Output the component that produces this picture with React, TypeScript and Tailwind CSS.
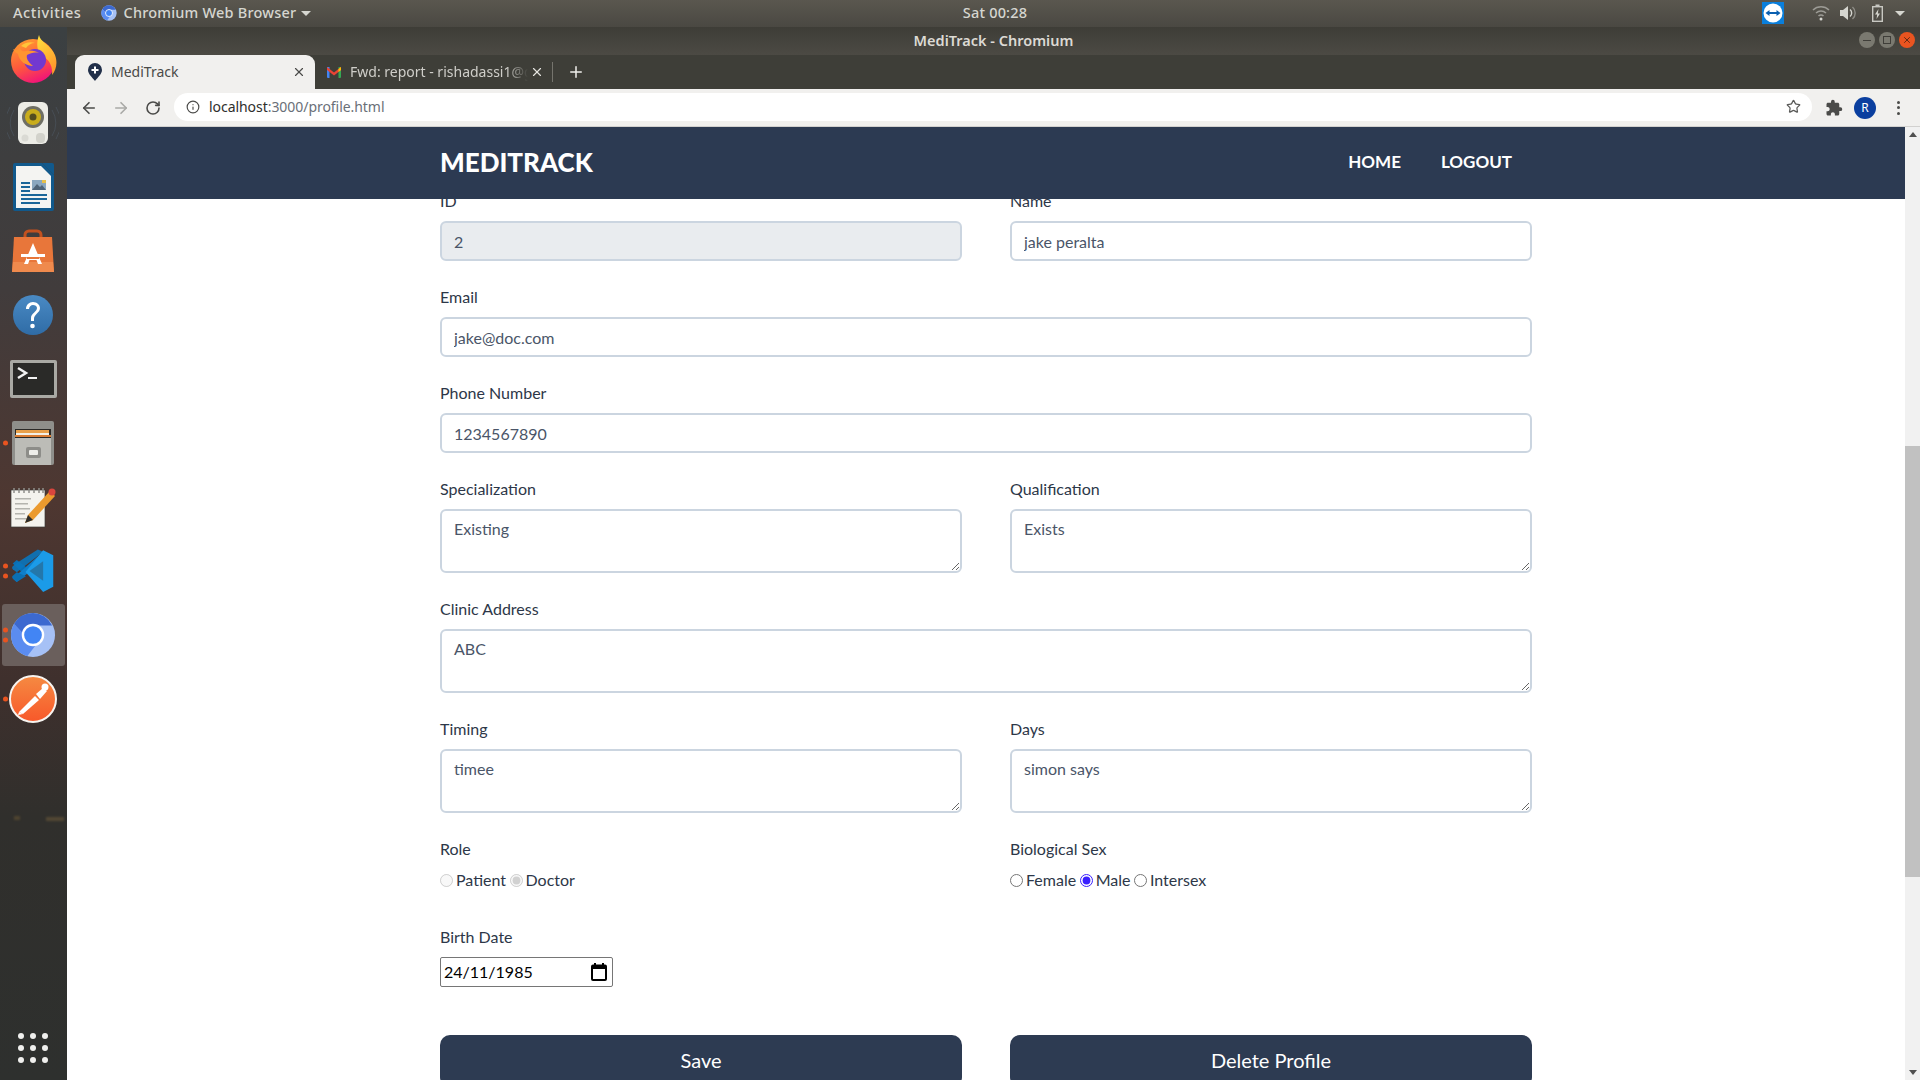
import { ArrowLeft, ArrowRight, Info, Plus, RotateCw, Star, X } from "lucide-react";
import { MdExtension } from "react-icons/md";

const labelClass = "block mb-2 text-base leading-6 text-[#2d3748]";
const fieldClass =
  "block w-full border-2 border-[#cbd5e0] rounded-md px-3 text-base text-[#4a5568] outline-none";

const ChromiumIcon = ({ size }: { size: number }) => (
  <svg width={size} height={size} viewBox="0 0 48 48">
    <circle cx="24" cy="24" r="23" fill="#a6c1f6" />
    <path d="M24 1a23 23 0 0 0-19.9 11.5L15 24l9-10h20A23 23 0 0 0 24 1z" fill="#3c69d0" />
    <path d="M4.1 12.5A23 23 0 0 0 18 46.2L28 33 15 24z" fill="#5b8cf0" />
    <circle cx="24" cy="24" r="10.5" fill="#4285f4" stroke="#fff" strokeWidth="2.5" />
  </svg>
);

const FirefoxIcon = () => (
  <svg width="48" height="48" viewBox="0 0 48 48">
    <defs>
      <linearGradient id="ffBody" x1="0.2" y1="0" x2="0.6" y2="1">
        <stop offset="0" stopColor="#ff9f2e" />
        <stop offset="0.55" stopColor="#ff5a3c" />
        <stop offset="1" stopColor="#f0127a" />
      </linearGradient>
      <linearGradient id="ffTop" x1="0" y1="0" x2="0.4" y2="1">
        <stop offset="0" stopColor="#ffe23f" />
        <stop offset="1" stopColor="#ff9a2c" />
      </linearGradient>
    </defs>
    <circle cx="24" cy="26" r="22" fill="url(#ffBody)" />
    <path d="M30 0c1 7 12 10 16 20 3 8 1 15-3 20 1-9-3-16-11-20-4-3-5-12-2-20z" fill="url(#ffTop)" />
    <circle cx="26" cy="25" r="11" fill="#7238d0" />
    <path d="M4 14c3 2 5 1 7-2 0 3 2 5 6 4 5-1 10 0 13 2-5-1-8 0-12 2-1 3 1 7 6 11-7 0-14-5-15-12-2-1-4-3-5-5z" fill="#ff9430" />
    <path d="M12 11c3-3 9-5 14-3-4 0-7 2-9 5z" fill="#ffc53a" />
  </svg>
);

const RhythmboxIcon = () => (
  <svg width="52" height="46" viewBox="0 0 52 46">
    <g fill="none" stroke="#4f5a66" strokeWidth="1" opacity="0.55">
      <path d="M7 10a24 24 0 0 0 0 26" />
      <path d="M3 7a30 30 0 0 0 0 32" />
      <path d="M45 10a24 24 0 0 1 0 26" />
      <path d="M49 7a30 30 0 0 1 0 32" />
    </g>
    <rect x="11" y="2" width="30" height="42" rx="6" fill="#ecece6" />
    <circle cx="26" cy="17" r="11" fill="#6e6e64" />
    <circle cx="26" cy="17" r="8" fill="#c9ad1c" />
    <circle cx="26" cy="17" r="3.5" fill="#544d20" />
    <rect x="29" y="33" width="9" height="10" rx="4" fill="#d2d2cb" />
    <circle cx="18" cy="38" r="3.5" fill="#dadad4" />
  </svg>
);

const WriterIcon = () => (
  <svg width="41" height="48" viewBox="0 0 41 48">
    <path d="M2 0h27l12 12v34a2 2 0 0 1-2 2H2a2 2 0 0 1-2-2V2a2 2 0 0 1 2-2z" fill="#11598c" />
    <path d="M3 3h25l10 10v32H3z" fill="#f4f4f2" />
    <path d="M29 0h10a2 2 0 0 1 2 2v10z" fill="#11598c" />
    <rect x="19" y="17" width="14" height="10" fill="#8aa7bf" />
    <path d="M19 27l5-6 3 3 2-2 4 5z" fill="#4e6478" />
    <rect x="29" y="17" width="4" height="3" fill="#e7c14a" />
    <g fill="#1b6699">
      <rect x="8" y="19" width="9" height="2" />
      <rect x="8" y="23" width="9" height="2" />
      <rect x="8" y="27" width="9" height="2" />
      <rect x="8" y="31" width="26" height="2" />
      <rect x="8" y="35" width="26" height="2" />
      <rect x="8" y="39" width="19" height="2" />
    </g>
  </svg>
);

const StoreIcon = () => (
  <svg width="42" height="44" viewBox="0 0 42 44">
    <path d="M13 13V6a4 4 0 0 1 4-4h8a4 4 0 0 1 4 4v7" fill="none" stroke="#c2511f" strokeWidth="3" />
    <path d="M2 8h38l2 35H0z" fill="#e8763a" />
    <path d="M1 33h40l1 10H0z" fill="#ef8a4d" />
    <path d="M21 14l9 21h-4l-1.5-4h-7L16 35h-4z" fill="#fff" />
    <rect x="9" y="25" width="24" height="3" fill="#fff" />
    <rect x="15" y="28" width="12" height="2" fill="#e8763a" />
  </svg>
);

const HelpIcon = () => (
  <svg width="40" height="40" viewBox="0 0 40 40">
    <defs>
      <linearGradient id="helpBody" x1="0.5" y1="0" x2="0.5" y2="1">
        <stop offset="0" stopColor="#4a8ac4" />
        <stop offset="1" stopColor="#2f6ca6" />
      </linearGradient>
    </defs>
    <circle cx="20" cy="20" r="20" fill="url(#helpBody)" />
    <path d="M13 14c0-4 3-7 7-7s7 3 7 6c0 5-6 6-6 11v2h-3v-3c0-5 6-6 6-10 0-2-2-3-4-3s-4 2-4 4z" fill="#fff" />
    <circle cx="19.5" cy="31" r="2.3" fill="#fff" />
  </svg>
);

const TerminalIcon = () => (
  <svg width="47" height="38" viewBox="0 0 47 38">
    <rect width="47" height="38" rx="2" fill="#a9a9a4" />
    <rect x="3" y="3" width="41" height="32" fill="#2a2a28" />
    <path d="M8 8l8 5-8 5" fill="none" stroke="#f2f2f2" strokeWidth="2.5" />
    <rect x="18" y="17" width="9" height="2" fill="#f2f2f2" />
  </svg>
);

const FilesIcon = () => (
  <svg width="42" height="44" viewBox="0 0 42 44">
    <rect x="0" y="0" width="42" height="44" rx="2" fill="#8f8f8b" />
    <rect x="3" y="8" width="36" height="11" fill="#2b2a28" />
    <rect x="4" y="9" width="33" height="3" fill="#e9a04a" />
    <rect x="4" y="12" width="33" height="2" fill="#f3f0e6" />
    <rect x="3" y="14" width="36" height="2" fill="#d97c33" />
    <rect x="3" y="17" width="36" height="27" fill="#bcbcb7" />
    <rect x="14" y="26" width="15" height="11" rx="2" fill="#8d8d89" />
    <rect x="17" y="29" width="9" height="5" rx="1" fill="#eeeeea" />
  </svg>
);

const GeditIcon = () => (
  <svg width="46" height="42" viewBox="0 0 46 42">
    <rect x="1" y="4" width="34" height="37" fill="#f4f3ee" stroke="#3b3b38" strokeWidth="0.7" />
    <g fill="#b4b4ae">
      <rect x="5" y="12" width="16" height="1.5" />
      <rect x="5" y="17" width="13" height="1.5" />
      <rect x="5" y="22" width="15" height="1.5" />
      <rect x="5" y="27" width="10" height="1.5" />
      <rect x="5" y="32" width="14" height="1.5" />
    </g>
    <g fill="none" stroke="#8f8f8a" strokeWidth="1.5">
      <path d="M4 7V2M9 7V2M14 7V2M19 7V2M24 7V2M29 7V2M33 7V2" />
    </g>
    <path d="M40 5l5 5-22 24-8 3 3-8z" fill="#eb9a2e" />
    <path d="M15 37l3-8 5 5z" fill="#2c2c2a" />
    <circle cx="42" cy="6" r="3.5" fill="#d8453e" />
  </svg>
);

const VscodeIcon = () => (
  <svg width="44" height="44" viewBox="0 0 100 100">
    <path d="M4 33l9-8 21 16-6 9-6 0z" fill="#0a6fb3" />
    <path d="M4 67l9 8 60-48V6z" fill="#0f7fca" />
    <path d="M4 67c-2-2-2-4 0-6l9-8 21 9-21 13z" fill="#0a6fb3" />
    <path d="M73 6L13 53 4 46c-2-2-2-5 0-7l9-7 48-31z" fill="#0a75bd" opacity="0.9" />
    <path d="M73 3l23 11v72L73 98l-40-46z" fill="#1b9be8" />
    <path d="M73 28L42 50l31 22z" fill="#33333a" opacity="0.35" />
  </svg>
);

const PostmanIcon = () => (
  <svg width="48" height="48" viewBox="0 0 48 48">
    <defs>
      <linearGradient id="pmBody" x1="0.5" y1="0" x2="0.5" y2="1">
        <stop offset="0" stopColor="#f58a42" />
        <stop offset="1" stopColor="#f8582a" />
      </linearGradient>
    </defs>
    <circle cx="24" cy="24" r="23" fill="url(#pmBody)" stroke="#f7f4f0" strokeWidth="2" />
    <path d="M10 37l16-16 4 4-16 14z" fill="#fff" />
    <path d="M27 19l7-6 4 3-7 8z" fill="#fff" />
    <circle cx="36" cy="12" r="3.5" fill="#fff" />
    <path d="M10 37l-1 3 5-1z" fill="#fff" />
  </svg>
);

const GridDots = () => (
  <div className="grid grid-cols-3 gap-[6px]">
    {Array.from({ length: 9 }).map((_, i) => (
      <span key={i} className="w-[6px] h-[6px] rounded-full bg-[#f0f0ee]" />
    ))}
  </div>
);

const RunDots = ({ count }: { count: number }) => (
  <div className="absolute left-[3px] top-1/2 -translate-y-1/2 flex flex-col gap-[5px]">
    {Array.from({ length: count }).map((_, i) => (
      <span key={i} className="w-[5px] h-[5px] rounded-full bg-[#e95420]" />
    ))}
  </div>
);

const Slot = ({ children, dots = 0, active = false }: { children: React.ReactNode; dots?: number; active?: boolean }) => (
  <div className="relative h-16 flex items-center justify-center shrink-0 pr-px">
    {active && <div className="absolute left-[2px] right-[2px] top-[1px] bottom-[1px] rounded-[3px] bg-[#6a5f5c]" />}
    <div className="relative flex">{children}</div>
    {dots > 0 && <RunDots count={dots} />}
  </div>
);

const Dock = () => (
  <aside className="relative w-[67px] shrink-0 flex flex-col bg-[linear-gradient(180deg,#3b4042_0%,#413c3c_25%,#4e3731_45%,#3f302d_62%,#302f2c_75%,#2e302e_100%)]">
    {/* faint wallpaper lights behind the dock */}
    <span className="absolute left-[14px] top-[789px] w-[6px] h-[4px] bg-[#6e5a34] blur-[1px] opacity-50" />
    <span className="absolute left-[46px] top-[790px] w-[18px] h-[4px] bg-[#75603c] blur-[1px] opacity-50" />
    <Slot><FirefoxIcon /></Slot>
    <Slot><RhythmboxIcon /></Slot>
    <Slot><WriterIcon /></Slot>
    <Slot><StoreIcon /></Slot>
    <Slot><HelpIcon /></Slot>
    <Slot><TerminalIcon /></Slot>
    <Slot dots={1}><FilesIcon /></Slot>
    <Slot><GeditIcon /></Slot>
    <Slot dots={2}><VscodeIcon /></Slot>
    <Slot dots={2} active><ChromiumIcon size={46} /></Slot>
    <Slot dots={1}><PostmanIcon /></Slot>
    <div className="mt-auto mb-[17px] pr-px flex justify-center"><GridDots /></div>
  </aside>
);

const TopBar = () => (
  <header className="relative h-[27px] shrink-0 flex items-center pb-px bg-[linear-gradient(180deg,#5a574f,#4a4842)] font-['Noto_Sans',sans-serif] text-[14.5px] font-medium text-[#d6d6d0] tracking-[0.2px]">
    <span className="ml-[13px] tracking-[0.6px]">Activities</span>
    <span className="ml-[20px] flex"><ChromiumIcon size={16} /></span>
    <span className="ml-[6px]">Chromium Web Browser</span>
    <span className="ml-[5px] border-x-[5px] border-x-transparent border-t-[5px] border-t-[#d6d6d0]" />
    <span className="absolute left-1/2 -translate-x-1/2 ml-[35px]">Sat 00:28</span>
    <div className="ml-auto flex items-center">
      <div className="w-[22px] h-[22px] bg-[#0a7fdc] flex items-center justify-center">
        <svg width="20" height="20" viewBox="0 0 20 20">
          <circle cx="10" cy="10" r="9.5" fill="#fff" />
          <path d="M2.5 10l4-3v2h7V7l4 3-4 3v-2h-7v2z" fill="#0a5fb0" />
        </svg>
      </div>
      <svg className="ml-[28px]" width="18" height="16" viewBox="0 0 18 16" fill="none" stroke="#9c9b95" strokeWidth="1.5">
        <path d="M1 5a11.5 11.5 0 0 1 16 0" />
        <path d="M4 8a7.5 7.5 0 0 1 10 0" />
        <path d="M6.5 11a3.5 3.5 0 0 1 5 0" />
        <circle cx="9" cy="14" r="1.5" fill="#d6d6d0" stroke="none" />
      </svg>
      <svg className="ml-[10px]" width="17" height="16" viewBox="0 0 17 16" fill="none">
        <path d="M0 5h3l5-4v14l-5-4H0z" fill="#d6d6d0" />
        <path d="M10 4.5a4.5 4.5 0 0 1 0 7" stroke="#d6d6d0" strokeWidth="1.4" />
        <path d="M12.5 2a8 8 0 0 1 0 12" stroke="#8e8d87" strokeWidth="1.4" />
      </svg>
      <svg className="ml-[15px]" width="11" height="18" viewBox="0 0 11 18" fill="none">
        <rect x="0.7" y="2.7" width="9.6" height="14.6" stroke="#c8c8c2" strokeWidth="1.4" />
        <rect x="3.5" y="0.5" width="4" height="2" fill="#c8c8c2" />
        <path d="M6.5 5L3 10.5h2.2L4.5 15 8 9.5H5.8z" fill="#d6d6d0" />
      </svg>
      <span className="ml-[12px] mr-[15px] border-x-[5px] border-x-transparent border-t-[5px] border-t-[#d6d6d0]" />
    </div>
  </header>
);

const WindowButtons = () => (
  <div className="absolute right-[5px] top-[5px] flex gap-[4px]">
    <span className="w-4 h-4 rounded-full bg-[#7a7970] flex items-center justify-center">
      <span className="w-2 h-px bg-[#3f3e39]" />
    </span>
    <span className="w-4 h-4 rounded-full bg-[#7a7970] flex items-center justify-center">
      <span className="w-2 h-2 border border-[#3f3e39]" />
    </span>
    <span className="w-4 h-4 rounded-full bg-[#e95420] flex items-center justify-center">
      <X size={10} strokeWidth={2} color="#4a2212" />
    </span>
  </div>
);

const TabStrip = () => (
  <div className="h-[34px] shrink-0 flex items-stretch pl-2 bg-[#3e3e38] font-['Noto_Sans',sans-serif] text-[14px]">
    <div className="w-[240px] flex items-center pl-[13px] pr-[9px] pb-px rounded-t-[9px] bg-[#f1f0ee] text-[#4a4a48]">
      <svg width="14" height="18" viewBox="0 0 14 18">
        <path d="M7 0a7 7 0 0 1 7 7c0 4-4 7-7 11-3-4-7-7-7-11a7 7 0 0 1 7-7z" fill="#22304a" />
        <path d="M6 3.5h2V6h2.5v2H8v2.5H6V8H3.5V6H6z" fill="#fff" />
      </svg>
      <span className="ml-[9px]">MediTrack</span>
      <X className="ml-auto" size={14} strokeWidth={2} color="#4a4a48" />
    </div>
    <div className="w-[238px] flex items-center pl-3 pb-px text-[#cfcec9]">
      <svg width="14" height="12" viewBox="0 0 14 12" className="shrink-0">
        <path d="M0 1h2.5v11H1a1 1 0 0 1-1-1z" fill="#4285f4" />
        <path d="M11.5 1H14v10a1 1 0 0 1-1 1h-1.5z" fill="#34a853" />
        <path d="M0 1l7 5.5L14 1v3L7 9.500 0 4z" fill="#ea4335" />
        <path d="M11.5 3L14 1v3l-2.5 2z" fill="#fbbc04" />
      </svg>
      <span className="ml-[9px] w-[178px] overflow-hidden whitespace-nowrap [mask-image:linear-gradient(90deg,#000_88%,transparent)]">Fwd: report - rishadassi1@gmail.com</span>
      <X className="ml-[2px] shrink-0" size={14} strokeWidth={2} color="#e4e3df" />
      <span className="ml-[8px] w-px h-[20px] bg-[#75746d] shrink-0" />
    </div>
    <div className="flex items-center ml-[14px]">
      <Plus size={18} strokeWidth={2} color="#f0efeb" />
    </div>
  </div>
);

const Toolbar = () => (
  <div className="h-[38px] shrink-0 flex items-center pl-[13px] bg-[#f1f0ee] border-b border-[#d2d1cf]">
    <ArrowLeft size={18} strokeWidth={2.2} color="#4b4b49" />
    <ArrowRight className="ml-[14px]" size={18} strokeWidth={2.2} color="#a9a9a6" />
    <RotateCw className="ml-[15px]" size={16} strokeWidth={2.4} color="#4b4b49" />
    <div className="ml-[13px] flex-1 h-7 -mt-px flex items-center rounded-full bg-white pl-3 pr-[11px] pb-px font-['Noto_Sans',sans-serif] text-[14px] tracking-[-0.05px]">
      <Info size={14} strokeWidth={2} color="#4b4b49" />
      <span className="ml-[9px] text-[#2e2e2c]">localhost</span>
      <span className="text-[#6a6f78]">:3000/profile.html</span>
      <Star className="ml-auto" size={15} strokeWidth={2} color="#5a5a58" />
    </div>
    <MdExtension className="ml-[13px]" size={18} color="#4b4b49" />
    <span className="ml-[11px] w-[22px] h-[22px] rounded-full bg-[#0b3f9f] flex items-center justify-center font-['Noto_Sans',sans-serif] text-[12px] text-white">R</span>
    <span className="ml-[21px] mr-[20px] flex flex-col gap-[2.5px]">
      <span className="w-[3px] h-[3px] rounded-full bg-[#4b4b49]" />
      <span className="w-[3px] h-[3px] rounded-full bg-[#4b4b49]" />
      <span className="w-[3px] h-[3px] rounded-full bg-[#4b4b49]" />
    </span>
  </div>
);

const Scrollbar = () => (
  <div className="w-[15px] shrink-0 flex flex-col items-center bg-[#f1f1f1]">
    <span className="mt-[5px] border-x-[4px] border-x-transparent border-b-[5px] border-b-[#505050]" />
    <div className="mt-[309px] w-full h-[431px] bg-[#c1c1c1]" />
    <span className="mt-auto mb-[5px] border-x-[4px] border-x-transparent border-t-[5px] border-t-[#505050]" />
  </div>
);

const Field = ({ label, value, disabled = false, wide = false }: { label: string; value: string; disabled?: boolean; wide?: boolean }) => (
  <div className={wide ? "col-span-2" : ""}>
    <label className={labelClass}>{label}</label>
    <input
      readOnly
      disabled={disabled}
      defaultValue={value}
      className={`${fieldClass} h-10 ${disabled ? "bg-[#e9ecef]" : "bg-white"}`}
    />
  </div>
);

const Area = ({ label, value, wide = false }: { label: string; value: string; wide?: boolean }) => (
  <div className={wide ? "col-span-2" : ""}>
    <label className={labelClass}>{label}</label>
    <textarea readOnly defaultValue={value} className={`${fieldClass} h-16 py-[6px] bg-white`} />
  </div>
);

const Radio = ({ label, checked = false, disabled = false }: { label: string; checked?: boolean; disabled?: boolean }) => (
  <label className="flex items-center gap-[3px] mr-[3.5px]">
    <input type="radio" readOnly checked={checked} disabled={disabled} className="accent-[#3a1fff]" />
    {label}
  </label>
);

const ProfileForm = () => (
  <form className="w-[1092px] mx-auto -mt-[10px] pb-10 grid grid-cols-2 gap-x-12 gap-y-6">
    <Field label="ID" value="2" disabled />
    <Field label="Name" value="jake peralta" />
    <Field label="Email" value="jake@doc.com" wide />
    <Field label="Phone Number" value="1234567890" wide />
    <Area label="Specialization" value="Existing" />
    <Area label="Qualification" value="Exists" />
    <Area label="Clinic Address" value="ABC" wide />
    <Area label="Timing" value="timee" />
    <Area label="Days" value="simon says" />
    <div>
      <label className={labelClass}>Role</label>
      <div className="flex text-base leading-6 text-[#2d3748] mt-px mb-[10px] h-[22px]">
        <Radio label="Patient" disabled />
        <Radio label="Doctor" checked disabled />
      </div>
    </div>
    <div>
      <label className={labelClass}>Biological Sex</label>
      <div className="flex text-base leading-6 text-[#2d3748] mt-px mb-[10px] h-[22px]">
        <Radio label="Female" />
        <Radio label="Male" checked />
        <Radio label="Intersex" />
      </div>
    </div>
    <div className="col-span-2">
      <label className={labelClass}>Birth Date</label>
      <div className="w-[173px] h-[30px] flex items-center justify-between pl-[3px] pr-[4px] border border-[#767676] rounded-[2px] text-base text-black">
        24/11/1985
        <svg width="18" height="20" viewBox="0 0 18 20">
          <rect x="2" y="3.5" width="14" height="14.5" rx="1" fill="none" stroke="#000" strokeWidth="2" />
          <rect x="2" y="3" width="14" height="4" fill="#000" />
          <rect x="4" y="1" width="2" height="3" fill="#000" />
          <rect x="12" y="1" width="2" height="3" fill="#000" />
        </svg>
      </div>
    </div>
    <button type="button" className="mt-6 h-[52px] pb-[2px] rounded-[10px] bg-[#2d3b52] text-white text-xl">Save</button>
    <button type="button" className="mt-6 h-[52px] pb-[2px] rounded-[10px] bg-[#2d3b52] text-white text-xl">Delete Profile</button>
  </form>
);

const SiteNav = () => (
  <nav className="relative z-10 h-[72px] shrink-0 bg-[#2c3a52] text-white">
    <div className="w-[1092px] h-full mx-auto pb-[2px] flex items-center justify-between">
      <span className="text-[26px] font-black">MEDITRACK</span>
      <div className="flex font-bold text-[17px]">
        <a className="px-5">HOME</a>
        <a className="px-5">LOGOUT</a>
      </div>
    </div>
  </nav>
);

export default function App() {
  return (
    <div className="h-screen flex flex-col overflow-hidden font-[Lato,sans-serif]">
      <TopBar />
      <div className="flex-1 min-h-0 flex">
        <Dock />
        <div className="flex-1 min-w-0 flex flex-col">
          <div className="relative h-7 shrink-0 flex items-center justify-center bg-[linear-gradient(180deg,#3e3d37,#4c4a44)] font-['Noto_Sans',sans-serif] text-[14.5px] font-semibold text-[#dcdad4]">
            MediTrack - Chromium
            <WindowButtons />
          </div>
          <TabStrip />
          <Toolbar />
          <div className="flex-1 min-h-0 flex bg-white">
            <main className="flex-1 min-w-0 overflow-hidden">
              <SiteNav />
              <ProfileForm />
            </main>
            <Scrollbar />
          </div>
        </div>
      </div>
    </div>
  );
}
